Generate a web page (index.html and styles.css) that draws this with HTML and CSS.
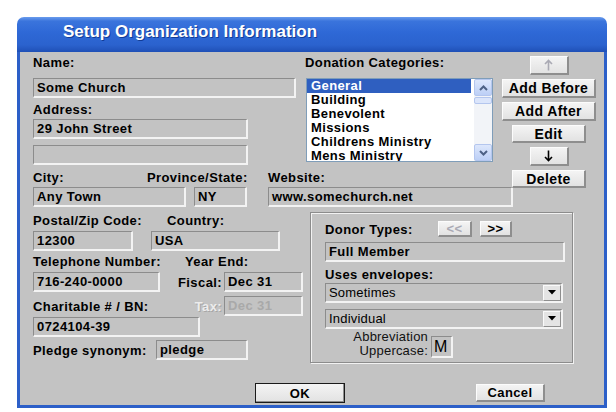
FILE: index.html
```html
<!DOCTYPE html>
<html lang="en">
<head>
    <meta charset="UTF-8">
    <title>Setup Organization Information</title>
    <link rel="stylesheet" href="styles.css">
</head>
<body>
    <div class="window">
        <div class="titlebar">Setup Organization Information</div>
        <div class="client">
            <div class="top">
                <div class="main">
                    <div class="upper">
                        <div class="name-col">
                            <div class="lbl">Name:</div>
                            <div class="field f-name">Some Church</div>
                            <div class="lbl l-address">Address:</div>
                            <div class="field f-addr1">29 John Street</div>
                            <div class="field f-addr2"></div>
                        </div>
                        <div class="cats">
                            <div class="lbl">Donation Categories:</div>
                            <div class="listbox">
                                <ul class="items">
                                    <li class="sel">General</li>
                                    <li>Building</li>
                                    <li>Benevolent</li>
                                    <li>Missions</li>
                                    <li>Childrens Ministry</li>
                                    <li>Mens Ministry</li>
                                </ul>
                                <div class="vscroll">
                                    <div class="sb-btn">
                                        <svg width="9" height="6" viewBox="0 0 9 6"><polyline points="1,5 4.5,1.5 8,5" fill="none" stroke="#4d6185" stroke-width="2"/></svg>
                                    </div>
                                    <div class="sb-thumb"></div>
                                    <div class="sb-track"></div>
                                    <div class="sb-btn">
                                        <svg width="9" height="6" viewBox="0 0 9 6"><polyline points="1,1 4.5,4.5 8,1" fill="none" stroke="#4d6185" stroke-width="2"/></svg>
                                    </div>
                                </div>
                            </div>
                        </div>
                    </div>
                    <div class="row city-labels">
                        <div class="lbl l-city">City:</div>
                        <div class="lbl l-prov">Province/State:</div>
                        <div class="lbl">Website:</div>
                    </div>
                    <div class="row city-fields">
                        <div class="field f-city">Any Town</div>
                        <div class="field f-state">NY</div>
                        <div class="field f-web">www.somechurch.net</div>
                    </div>
                </div>
                <div class="cat-buttons">
                    <button class="btn b-arrow disabled" title="Move up">
                        <svg width="9" height="12" viewBox="0 0 9 12"><path d="M4.5 11.5V1.5M1 5l3.5-3.5L8 5" fill="none" stroke="currentColor" stroke-width="1.6"/></svg>
                    </button>
                    <button class="btn b-wide">Add Before</button>
                    <button class="btn b-wide">Add After</button>
                    <button class="btn b-mid">Edit</button>
                    <button class="btn b-arrow" title="Move down">
                        <svg width="9" height="12" viewBox="0 0 9 12"><path d="M4.5 0.5v10M1 7l3.5 3.5L8 7" fill="none" stroke="currentColor" stroke-width="1.6"/></svg>
                    </button>
                    <button class="btn b-mid">Delete</button>
                </div>
            </div>

            <div class="lower">
                <div class="lower-left">
                    <div class="row">
                        <div class="lbl l-postal">Postal/Zip Code:</div>
                        <div class="lbl">Country:</div>
                    </div>
                    <div class="row gap3">
                        <div class="field f-postal">12300</div>
                        <div class="field f-country">USA</div>
                    </div>
                    <div class="row gap3">
                        <div class="lbl l-phone">Telephone Number:</div>
                        <div class="lbl">Year End:</div>
                    </div>
                    <div class="row gap3 wide-row">
                        <div class="field f-phone">716-240-0000</div>
                        <div class="lbl side-lbl">Fiscal:</div>
                        <div class="field f-date">Dec 31</div>
                    </div>
                    <div class="row wide-row tax-row">
                        <div class="lbl">Charitable # / BN:</div>
                        <div class="lbl side-lbl dim">Tax:</div>
                        <div class="field f-date dim-field">Dec 31</div>
                    </div>
                    <div class="field f-bn">0724104-39</div>
                    <div class="row gap3">
                        <div class="lbl l-pledge">Pledge synonym:</div>
                        <div class="field f-pledge">pledge</div>
                    </div>
                </div>

                <div class="group">
                    <div class="row donor-row">
                        <div class="lbl l-donor">Donor Types:</div>
                        <button class="btn b-nav disabled">&lt;&lt;</button>
                        <button class="btn b-nav b-next">&gt;&gt;</button>
                    </div>
                    <div class="field f-type">Full Member</div>
                    <div class="lbl l-env">Uses envelopes:</div>
                    <div class="combo c-env">
                        <span>Sometimes</span>
                        <div class="drop"><svg width="8" height="5" viewBox="0 0 8 5"><polygon points="0,0 8,0 4,4.5" fill="#000"/></svg></div>
                    </div>
                    <div class="combo c-kind">
                        <span>Individual</span>
                        <div class="drop"><svg width="8" height="5" viewBox="0 0 8 5"><polygon points="0,0 8,0 4,4.5" fill="#000"/></svg></div>
                    </div>
                    <div class="row abbr-row">
                        <div class="abbr-lbl">Abbreviation<br>Uppercase:</div>
                        <div class="field f-abbr">M</div>
                    </div>
                </div>
            </div>

            <div class="footer">
                <button class="btn b-ok">OK</button>
                <button class="btn b-cancel">Cancel</button>
            </div>
        </div>
    </div>
</body>
</html>
```

FILE: styles.css
```css
:root {
    --face: #c3c3c3;
    --frame: #2c5fc8;
    --shade: #8c8c8c;
    --light: #f3f3f3;
}
* {
    box-sizing: border-box;
}
body {
    margin: 0;
    background: #fff;
    font-family: "Liberation Sans", Arial, sans-serif;
    font-size: 13px;
    font-weight: bold;
    letter-spacing: 0.4px;
    color: #000;
}
.window {
    margin: 17px 0 0 17px;
    width: 590px;
}
.titlebar {
    height: 35px;
    padding-left: 46px;
    border-radius: 7px 7px 0 0;
    background: linear-gradient(180deg, #6a9ced 0%, #3a74dc 12%, #2e68d6 45%, #2b62ce 80%, #1f50b6 100%);
    color: #fff;
    font-size: 17px;
    letter-spacing: 0;
    line-height: 29px;
    text-shadow: 1px 1px 0 #123c96;
}
.client {
    background: var(--face);
    border: 3px solid var(--frame);
    border-top: 0;
    padding: 3px 0 2px 13px;
}
.row {
    display: flex;
    align-items: center;
}
.lbl {
    flex-shrink: 0;
    height: 15px;
    line-height: 15px;
    white-space: nowrap;
}
.field {
    flex-shrink: 0;
    height: 20px;
    padding-left: 3px;
    border-style: solid;
    border-width: 1px 2px 2px 1px;
    border-color: var(--shade) var(--light) var(--light) var(--shade);
    background: var(--face);
    line-height: 17px;
    white-space: nowrap;
    overflow: hidden;
}

/* top part */
.top {
    display: flex;
}
.main {
    width: 469px;
}
.upper {
    display: flex;
}
.name-col {
    width: 272px;
}
.f-name {
    width: 263px;
    margin-top: 8px;
}
.l-address {
    margin-top: 4px;
}
.f-addr1 {
    width: 215px;
    margin-top: 2px;
}
.f-addr2 {
    width: 215px;
    margin-top: 6px;
}
.cats {
    width: 188px;
}
.listbox {
    display: flex;
    width: 187px;
    height: 84px;
    margin: 8px 0 0 1px;
    border: 1px solid #7f9db9;
    background: #fff;
    overflow: hidden;
}
.items {
    flex: 1;
    margin: 0;
    padding: 0;
    list-style: none;
}
.items li {
    height: 14px;
    line-height: 14px;
    padding-left: 4px;
    white-space: nowrap;
}
.items li.sel {
    background: #2f5fc0;
    color: #fff;
    margin-right: 3px;
}
.vscroll {
    width: 18px;
    display: flex;
    flex-direction: column;
    background: #f2f4f8;
}
.sb-btn {
    height: 17px;
    display: flex;
    align-items: center;
    justify-content: center;
    border: 1px solid #b4c6ee;
    border-radius: 2px;
    background: linear-gradient(180deg, #dde7fc, #bccff6);
}
.sb-thumb {
    height: 7px;
    margin-top: 1px;
    border: 1px solid #b4c6ee;
    border-radius: 2px;
    background: #dbe5fb;
}
.sb-track {
    flex: 1;
}
.city-labels {
    margin-top: 5px;
}
.l-city {
    width: 114px;
}
.l-prov {
    width: 121px;
}
.city-fields {
    margin-top: 2px;
}
.f-city {
    width: 153px;
}
.f-state {
    width: 53px;
    margin-left: 8px;
}
.f-web {
    width: 245px;
    margin-left: 21px;
}

/* buttons */
.btn {
    flex-shrink: 0;
    display: flex;
    align-items: center;
    justify-content: center;
    padding: 0;
    height: 18px;
    border-style: solid;
    border-width: 1px 2px 2px 1px;
    border-color: #fcfcfc #8e8e8e #8e8e8e #fcfcfc;
    background: linear-gradient(180deg, #f4f4f4, #e2e2e2);
    font-family: "Liberation Sans", Arial, sans-serif;
    font-size: 13px;
    font-weight: bold;
    letter-spacing: 0.4px;
    color: #000;
}
.btn.disabled {
    color: #aaaab4;
}
.cat-buttons {
    width: 94px;
    display: flex;
    flex-direction: column;
    align-items: center;
    gap: 4px;
    padding-top: 1px;
}
.b-wide {
    width: 94px;
    height: 19px;
    font-size: 14px;
}
.b-mid {
    width: 74px;
    font-size: 14px;
}
.b-arrow {
    width: 39px;
    height: 19px;
}

/* lower part */
.lower {
    display: flex;
    margin-top: 5px;
}
.lower-left {
    width: 277px;
    padding-top: 1px;
}
.gap3 {
    margin-top: 3px;
}
.l-postal {
    width: 134px;
}
.f-postal {
    width: 100px;
}
.f-country {
    width: 129px;
    margin-left: 18px;
}
.l-phone {
    width: 152px;
}
.wide-row {
    width: 270px;
}
.f-phone {
    width: 127px;
}
.side-lbl {
    margin-left: auto;
    padding-right: 2px;
}
.f-date {
    width: 79px;
}
.tax-row {
    margin-top: 4px;
}
.dim {
    color: #ececec;
    text-shadow: 1px 1px 0 #a6a6a6;
}
.dim-field {
    color: #a9a9a9;
}
.f-bn {
    width: 167px;
    margin-top: 1px;
}
.l-pledge {
    width: 123px;
}
.f-pledge {
    width: 92px;
}

.group {
    width: 263px;
    height: 151px;
    padding: 8px 0 0 14px;
    border: 1px solid #8c8c8c;
    box-shadow: inset 1px 1px 0 #f2f2f2, 1px 1px 0 #f2f2f2;
}
.l-donor {
    width: 113px;
}
.b-nav {
    width: 34px;
    height: 16px;
}
.b-next {
    width: 32px;
    margin-left: 8px;
}
.f-type {
    width: 240px;
    margin-top: 5px;
}
.l-env {
    margin-top: 5px;
}
.combo {
    flex-shrink: 0;
    display: flex;
    align-items: center;
    width: 238px;
    height: 20px;
    padding-left: 3px;
    border-style: solid;
    border-width: 1px 2px 2px 1px;
    border-color: var(--shade) var(--light) var(--light) var(--shade);
    font-weight: normal;
    letter-spacing: 0.2px;
}
.combo span {
    flex: 1;
}
.c-env {
    margin-top: 1px;
}
.c-kind {
    margin-top: 6px;
}
.drop {
    width: 18px;
    height: 16px;
    display: flex;
    align-items: center;
    justify-content: center;
    border-style: solid;
    border-width: 1px;
    border-color: #fafafa #8e8e8e #8e8e8e #fafafa;
    background: #e4e4e4;
}
.abbr-row {
    align-items: flex-start;
    margin-top: 1px;
}
.abbr-lbl {
    width: 103px;
    font-weight: normal;
    letter-spacing: 0.2px;
    line-height: 14px;
    text-align: right;
    color: #111;
}
.f-abbr {
    width: 22px;
    height: 22px;
    margin: 6px 0 0 3px;
    padding-left: 2px;
    font-weight: normal;
    font-size: 16px;
    line-height: 20px;
}

/* footer */
.footer {
    display: flex;
    align-items: center;
    margin-top: 20px;
}
.b-ok {
    width: 90px;
    height: 20px;
    margin-left: 222px;
    border: 1px solid #1a1a1a;
    box-shadow: inset -1px -1px 0 #8e8e8e;
}
.b-cancel {
    width: 69px;
    margin-left: 131px;
}
```
